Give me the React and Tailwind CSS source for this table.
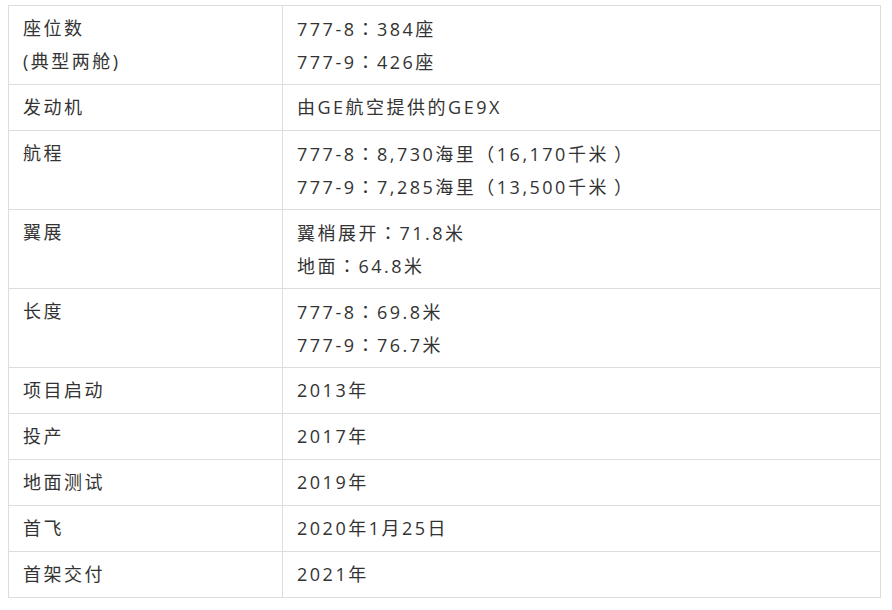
import React from "react";

const rows = [
  [["座位数", "(典型两舱)"], ["777-8：384座", "777-9：426座"]],
  [["发动机"], ["由GE航空提供的GE9X"]],
  [["航程"], ["777-8：8,730海里（16,170千米）", "777-9：7,285海里（13,500千米）"]],
  [["翼展"], ["翼梢展开：71.8米", "地面：64.8米"]],
  [["长度"], ["777-8：69.8米", "777-9：76.7米"]],
  [["项目启动"], ["2013年"]],
  [["投产"], ["2017年"]],
  [["地面测试"], ["2019年"]],
  [["首飞"], ["2020年1月25日"]],
  [["首架交付"], ["2021年"]],
];

function Line({ text }) {
  const parts = text.split(/([：）])/);
  return (
    <div className="h-[33px] whitespace-nowrap">
      {parts.map((p, i) => {
        if (p === "：")
          return (
            <span key={i} className="font-['Noto_Sans_CJK_TC',sans-serif]">
              {p}
            </span>
          );
        if (p === "）")
          return (
            <span key={i} className="relative left-[5px]">
              {p}
            </span>
          );
        return <React.Fragment key={i}>{p}</React.Fragment>;
      })}
    </div>
  );
}

function Cell({ lines, first }) {
  return (
    <td
      className={
        first
          ? "w-[274px] border border-[#ddd] px-[14px] py-[6px] align-top"
          : "border border-[#ddd] px-[14px] py-[6px] align-top"
      }
    >
      {lines.map((t, j) => (
        <Line key={j} text={t} />
      ))}
    </td>
  );
}

export default function App() {
  return (
    <div className="w-[892px] h-[610px] bg-white pt-[5px] pl-[8px] text-[#333] text-[18px] leading-[33px] tracking-[2.5px] font-['Open_Sans','Noto_Sans_CJK_SC',sans-serif]">
      <table className="w-[873px] border-collapse">
        <tbody>
          {rows.map((r, i) => (
            <tr key={i}>
              <Cell lines={r[0]} first />
              <Cell lines={r[1]} />
            </tr>
          ))}
        </tbody>
      </table>
    </div>
  );
}
